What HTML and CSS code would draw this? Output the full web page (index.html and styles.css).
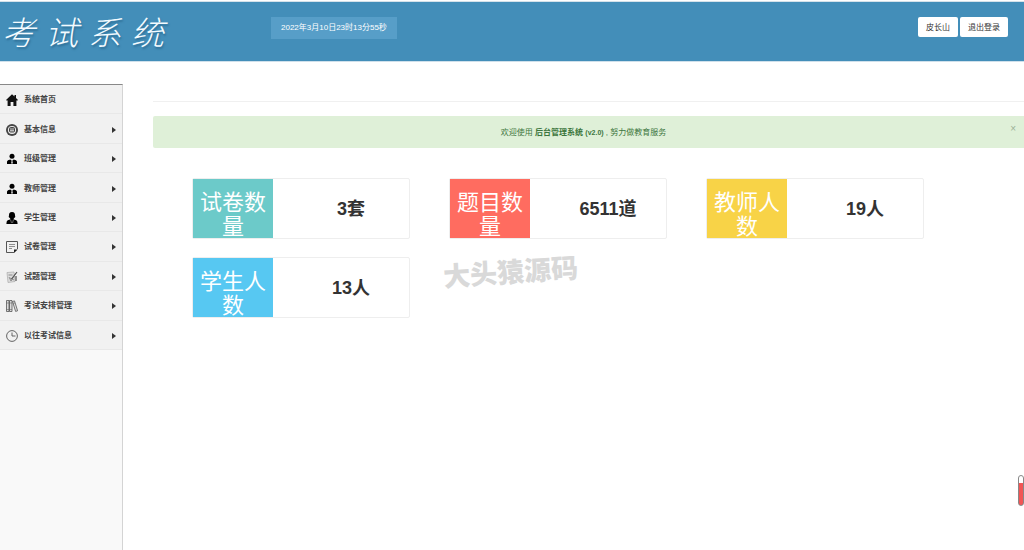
FILE: index.html
```html
<!DOCTYPE html>
<html lang="zh-CN">
<head>
<meta charset="utf-8">
<title>考试系统</title>
<link rel="stylesheet" href="styles.css">
</head>
<body>
<header class="topbar">
  <h1 class="logo"><span>考</span><span>试</span><span>系</span><span>统</span></h1>
  <div class="clock">2022年3月10日23时13分55秒</div>
  <div class="account"><button type="button">皮长山</button><button type="button">退出登录</button></div>
</header>
<div class="layout">
  <nav class="sidebar">
    <ul class="menu">
      <li><a href="#"><svg class="icon" viewBox="0 0 12 12"><path fill="#111" d="M6 .3 0 6l1 .8.6-.5V12h3V8h2.800v4h3V6.300l.6.5 1-.8-2-2V1H8.500v1.600z"/></svg><span>系统首页</span></a></li>
      <li><a href="#"><svg class="icon" viewBox="0 0 12 12"><circle cx="6" cy="6" r="6" fill="#444"/><circle cx="6" cy="6" r="4.100" fill="#eee"/><rect x="3.500" y="3.500" width="5" height="4.500" rx="1" fill="#bbb" stroke="#444"/><path stroke="#444" stroke-width=".8" d="M4 5h4"/></svg><span>基本信息</span><i class="arrow"></i></a></li>
      <li><a href="#"><svg class="icon" viewBox="0 0 12 12"><circle cx="6" cy="3.200" r="2.500"/><path d="M1 11V8.500Q1.300 7 4.300 6.500L6 8l1.700-1.500Q10.700 7 11 8.500V11z"/><path fill="#eee" d="m5.600 8-.5 2.500h1.800L6.400 8z"/></svg><span>班级管理</span><i class="arrow"></i></a></li>
      <li><a href="#"><svg class="icon" viewBox="0 0 12 12"><circle cx="6" cy="3.200" r="2.500"/><path d="M1 11V8.500Q1.300 7 4.300 6.500L6 8l1.700-1.500Q10.700 7 11 8.500V11z"/><path fill="#eee" d="m5.600 8-.5 2.500h1.800L6.400 8z"/></svg><span>教师管理</span><i class="arrow"></i></a></li>
      <li><a href="#"><svg class="icon" viewBox="0 0 12 12"><path d="M6 0C3.500 0 3 1.500 3 3.200L2.700 5l1.600 1.400L4 7.500Q1 8 .7 9.500L.4 12h11.200l-.3-2.500Q11 8 8 7.500l-.3-1.100L9.300 5 9 3.200C9 1.500 8.500 0 6 0z"/><path fill="none" stroke="#aaa" stroke-width=".6" d="m4.500 7.500 1 3.500M7.500 7.500l-1 3.500"/></svg><span>学生管理</span><i class="arrow"></i></a></li>
      <li><a href="#"><svg class="icon" viewBox="0 0 12 12"><path fill="none" stroke="#555" d="M8 11.500H.5V.5h11V8"/><path fill="none" stroke="#777" stroke-width=".8" d="M3 3.500h6M3 5.500h6M3 7.500h3"/><path fill="#222" d="M8 12V8.500h3.700z"/></svg><span>试卷管理</span><i class="arrow"></i></a></li>
      <li><a href="#"><svg class="icon" viewBox="0 0 12 12"><path fill="#ddd" stroke="#aaa" stroke-width=".7" d="M1 1.500 8 1l1 9.500-7 1z"/><path fill="none" stroke="#777" stroke-width=".8" d="M2.500 4h4M3 6l2 4 5-8M4 7l4 2"/><path fill="none" stroke="#555" stroke-width="1.200" d="m5.500 8 5.500-7M10 5v5"/></svg><span>试题管理</span><i class="arrow"></i></a></li>
      <li><a href="#"><svg class="icon" viewBox="0 0 12 12"><path fill="#ddd" stroke="#555" stroke-width=".8" d="M.5.5H3v11H.5zM3.500.5H6v11H3.500zM6.500 1.500l2-.6 3.100 9.900-2 .6z"/><path stroke="#666" stroke-width=".6" d="M.5 3H6M.5 9.500H6M7 3.500l2-.6"/></svg><span>考试安排管理</span><i class="arrow"></i></a></li>
      <li><a href="#"><svg class="icon" viewBox="0 0 12 12"><circle cx="6" cy="6" r="5.400" fill="none" stroke="#555" stroke-width=".9"/><path fill="none" stroke="#555" stroke-width=".9" d="M6 2.500V6h3.500"/></svg><span>以往考试信息</span><i class="arrow"></i></a></li>
    </ul>
  </nav>
  <main class="content">
    <hr class="rule">
    <div class="alert">
      <p>欢迎使用 <strong>后台管理系统 <small>(v2.0)</small></strong> , 努力做教育服务</p>
      <button type="button" class="close" aria-label="关闭">×</button>
    </div>
    <section class="cards">
      <article class="card"><h2 class="teal">试卷数量</h2><strong>3套</strong></article>
      <article class="card"><h2 class="red">题目数量</h2><strong>6511道</strong></article>
      <article class="card"><h2 class="yellow">教师人数</h2><strong>19人</strong></article>
      <article class="card"><h2 class="blue">学生人数</h2><strong>13人</strong></article>
    </section>
    <div class="watermark">大头猿源码</div>
  </main>
</div>
<div class="gauge"></div>
</body>
</html>
```
FILE: styles.css
```css
* { box-sizing: border-box; }
body {
  margin: 0;
  min-height: 100vh;
  display: flex;
  flex-direction: column;
  background: #fff;
  color: #333;
  font: 8px/12px "Liberation Sans", "Noto Sans CJK SC", sans-serif;
}
h1, h2, p, ul { margin: 0; padding: 0; }
button { font: inherit; cursor: pointer; }
.topbar {
  display: flex;
  align-items: flex-start;
  height: 60px;
  margin-top: 2px;
  padding-right: 16px;
  background: #438eb9;
  border-bottom: 1px solid #cfe0eb;
  box-shadow: 0 -1px #d5e2ea;
}
.logo {
  display: flex;
  gap: 10px;
  width: 271px;
  padding: 7px 0 0 2px;
  color: #f4fbff;
  font: italic 400 33px/44px "Noto Sans CJK SC", sans-serif;
  font-weight: 300;
  text-shadow: 1px 2px 2px #2f6f96;
}
.clock {
  margin-top: 15px;
  padding: 5px 10px;
  background: #579ec8;
  color: #fff;
}
.account { display: flex; gap: 2px; margin: 15px 0 0 auto; }
.account button {
  height: 20px;
  padding: 1px 8px 0;
  border: 0;
  border-radius: 2px;
  background: #fff;
  color: #333;
}
.layout { flex: 1; display: flex; padding-top: 22px; }
.sidebar {
  flex: 0 0 123px;
  background: #f9f9f9;
  border-top: 1px solid #888;
  border-right: 1px solid #d4d4d4;
}
.menu {
  display: grid;
  grid-template-rows: repeat(9, 1fr);
  height: 265px;
  list-style: none;
}
.menu a {
  display: flex;
  align-items: center;
  gap: 6px;
  height: 100%;
  padding: 2px 6px 0;
  border-bottom: 1px solid #e8e8e8;
  background: #f1f1f1;
  color: #444;
  font-weight: bold;
  text-decoration: none;
}
.icon { width: 12px; height: 12px; }
.arrow {
  margin-left: auto;
  border: solid transparent;
  border-width: 3px 0 3px 4px;
  border-left-color: #333;
}
.content { flex: 1; position: relative; padding-left: 30px; }
.rule { margin: 17px 0 14px; border: 0; border-top: 1px solid #f0f0f0; }
.alert {
  display: flex;
  align-items: center;
  height: 32px;
  padding: 1px 8px 0 4px;
  border-radius: 2px 0 0 2px;
  background: #dff0d8;
  color: #3c763d;
}
.alert p { flex: 1; text-align: center; }
.alert small { font-size: 7px; }
.close {
  align-self: flex-start;
  margin-top: 6px;
  padding: 0;
  border: 0;
  background: none;
  color: #9bb097;
  font-size: 10px;
}
.cards {
  display: grid;
  grid-template-columns: repeat(3, 1fr);
  gap: 18px 39px;
  padding: 30px 100px 0 39px;
}
.card {
  display: flex;
  height: 61px;
  border: 1px solid #eee;
  border-radius: 2px;
  background: #fff;
}
.card h2 {
  flex: 0 0 80px;
  padding: 12px 4px 0;
  overflow: hidden;
  color: #fff;
  font-size: 22px;
  font-weight: normal;
  line-height: 24px;
  text-align: center;
}
.card strong {
  flex: 1;
  padding-left: 20px;
  font-size: 18px;
  line-height: 60px;
  text-align: center;
}
.teal { background: #6ccac9; }
.red { background: #ff6c60; }
.yellow { background: #f8d347; }
.blue { background: #57c8f2; }
.watermark {
  position: absolute;
  left: 320px;
  top: 169px;
  color: #d9d9d9;
  font: 900 27px/36px "Noto Sans CJK SC", sans-serif;
  transform: rotate(-4deg);
}
.gauge {
  position: fixed;
  right: 0;
  top: 475px;
  width: 6px;
  height: 31px;
  border: 1px solid #888;
  border-radius: 3px;
  background: linear-gradient(#fff 25%, #f25555 25%);
}
```
